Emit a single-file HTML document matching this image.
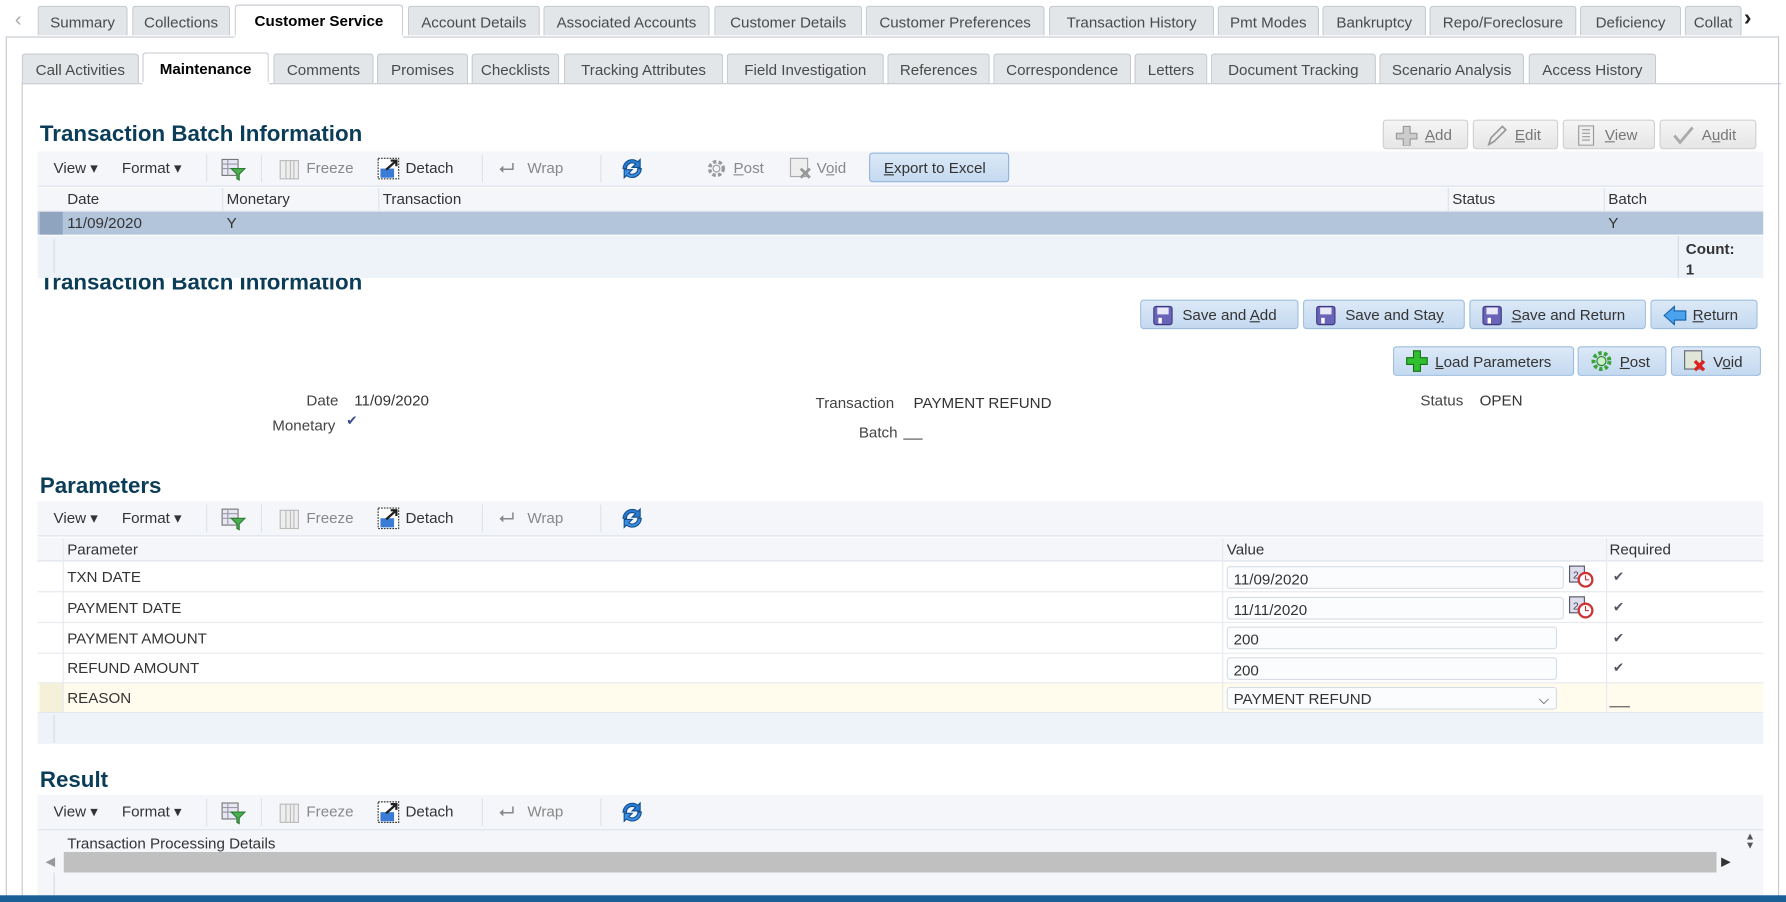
<!DOCTYPE html>
<html><head><meta charset="utf-8"><style>
html,body{margin:0;padding:0;background:#fff;overflow:hidden;width:1786px;height:902px}
#w{position:absolute;left:0;top:0;width:1568px;height:792px;transform:scale(1.13903);transform-origin:0 0;font-family:"Liberation Sans",sans-serif;font-size:13.3px;color:#333}
.a{position:absolute}
.tab{position:absolute;height:26px;line-height:27px;background:#e3e6e9;border:1px solid #c5cad0;border-bottom:none;border-radius:3px 3px 0 0;color:#4a4a4a;text-align:center;box-sizing:border-box}
.tab.on{background:#fff;color:#000;font-weight:bold;height:28px}
.h{position:absolute;font-weight:bold;font-size:19.6px;color:#0b3d58}
.tb{position:absolute;left:33px;width:1515px;height:30px;background:#f4f6fa;border-bottom:1px solid #dde2ea}
.tb span{position:absolute;top:7px;color:#333}
.tb .g{color:#888}
.sep{position:absolute;top:3px;width:1px;height:24px;background:#dde2ea}
.btn{position:absolute;height:26px;line-height:26px;border:1px solid #9cbde0;border-radius:3px;background:linear-gradient(#dce9f7,#c4d9f0);color:#333;box-sizing:border-box;padding-left:36px}
.btn.g{background:linear-gradient(#f5f5f5,#e6e6e6);border-color:#cfcfcf;color:#777}
u{text-decoration:underline}
.ic{position:absolute;left:10px;top:4px}
.lbl{position:absolute;color:#444}
.inp{position:absolute;height:20px;border:1px solid #d8dde5;border-radius:3px;background:#fbfcfe;line-height:21px;padding-left:5px;box-sizing:border-box}
.chk{position:absolute;color:#556;font-size:12px}
</style></head><body><div id="w">

<!-- top tabs -->
<div class="a" style="left:13px;top:7px;color:#aaa;font-size:18px">‹</div>
<div class="tab" style="left:33px;top:5px;width:79px">Summary</div>
<div class="tab" style="left:116px;top:5px;width:86px">Collections</div>
<div class="tab on" style="left:206px;top:4px;width:148px">Customer Service</div>
<div class="tab" style="left:358px;top:5px;width:116px">Account Details</div>
<div class="tab" style="left:477px;top:5px;width:146px">Associated Accounts</div>
<div class="tab" style="left:627px;top:5px;width:130px">Customer Details</div>
<div class="tab" style="left:760px;top:5px;width:157px">Customer Preferences</div>
<div class="tab" style="left:921px;top:5px;width:145px">Transaction History</div>
<div class="tab" style="left:1069px;top:5px;width:89px">Pmt Modes</div>
<div class="tab" style="left:1161px;top:5px;width:91px">Bankruptcy</div>
<div class="tab" style="left:1255px;top:5px;width:129px">Repo/Foreclosure</div>
<div class="tab" style="left:1387px;top:5px;width:89px">Deficiency</div>
<div class="tab" style="left:1479px;top:5px;width:50px;text-align:left;padding-left:7px;overflow:hidden">Collat</div>
<div class="a" style="left:1531px;top:5px;color:#222;font-size:20px;font-weight:bold">›</div>
<div class="a" style="left:5px;top:32px;width:1557px;height:760px;border:1px solid #c5cad0;border-bottom:none;box-sizing:border-box"></div>
<div class="a" style="left:206px;top:31px;width:148px;height:3px;background:#fff"></div>

<!-- second tabs -->
<div class="tab" style="left:19px;top:47px;width:103px">Call Activities</div>
<div class="tab on" style="left:125px;top:46px;width:111px">Maintenance</div>
<div class="tab" style="left:240px;top:47px;width:88px">Comments</div>
<div class="tab" style="left:331px;top:47px;width:80px">Promises</div>
<div class="tab" style="left:414px;top:47px;width:77px">Checklists</div>
<div class="tab" style="left:495px;top:47px;width:140px">Tracking Attributes</div>
<div class="tab" style="left:638px;top:47px;width:138px">Field Investigation</div>
<div class="tab" style="left:779px;top:47px;width:90px">References</div>
<div class="tab" style="left:872px;top:47px;width:121px">Correspondence</div>
<div class="tab" style="left:996px;top:47px;width:64px">Letters</div>
<div class="tab" style="left:1063px;top:47px;width:145px">Document Tracking</div>
<div class="tab" style="left:1211px;top:47px;width:127px">Scenario Analysis</div>
<div class="tab" style="left:1342px;top:47px;width:112px">Access History</div>
<div class="a" style="left:19px;top:73px;width:1545px;height:719px;border:1px solid #c5cad0;border-right:none;border-bottom:none;box-sizing:border-box"></div>
<div class="a" style="left:125px;top:72px;width:111px;height:3px;background:#fff"></div>

<!-- section 1 -->
<div class="h" style="left:35px;top:107px">Transaction Batch Information</div>
<div class="btn g" style="left:1214px;top:105px;width:75px">
<svg class="ic" width="20" height="18" viewBox="0 0 20 18"><path d="M7 1h6v6h6v5h-6v6H7v-6H1V7h6z" fill="#ccc" stroke="#999"/></svg><u>A</u>dd</div>
<div class="btn g" style="left:1293px;top:105px;width:75px">
<svg class="ic" width="20" height="18" viewBox="0 0 20 18"><path d="M3 17l2-6L15 1l3 3L8 14z" fill="none" stroke="#999" stroke-width="1.5"/></svg><u>E</u>dit</div>
<div class="btn g" style="left:1372px;top:105px;width:81px">
<svg class="ic" width="20" height="18" viewBox="0 0 20 18"><rect x="3" y="0.5" width="13" height="17" fill="#eee" stroke="#999"/><path d="M6 4h7M6 7h7M6 10h7M6 13h7" stroke="#999"/></svg><u>V</u>iew</div>
<div class="btn g" style="left:1457px;top:105px;width:85px">
<svg class="ic" width="20" height="18" viewBox="0 0 20 18"><path d="M2 9l5 6L18 2" fill="none" stroke="#aaa" stroke-width="2.5"/></svg>A<u>u</u>dit</div>

<div class="tb" style="top:133px">
<span style="left:14px">View ▾</span><span style="left:74px">Format ▾</span>
<div class="sep" style="left:148px"></div>
<svg class="a" style="left:161px;top:6px" width="22" height="20" viewBox="0 0 22 20"><rect x="1" y="1" width="14" height="14" fill="#e8e8f4" stroke="#777"/><path d="M1 5h14M1 9h14M6 1v14" stroke="#99a"/><path d="M9 9h12l-5 5v5l-2-1v-4z" fill="#4caf50" stroke="#2e7d32"/></svg>
<div class="sep" style="left:196px"></div>
<svg class="a" style="left:212px;top:7px" width="18" height="18" viewBox="0 0 18 18"><rect x="1" y="1" width="16" height="16" fill="#eee" stroke="#bbb"/><path d="M6 1v16M10 1v16M13 1v16" stroke="#bbb"/></svg>
<span class="g" style="left:236px">Freeze</span>
<svg class="a" style="left:298px;top:5px" width="20" height="20" viewBox="0 0 20 20"><rect x="1" y="1" width="18" height="18" fill="#fff" stroke="#333" stroke-dasharray="1.5 1"/><rect x="3" y="10" width="12" height="8" fill="#3a7bd5"/><path d="M8 11L17 3M12 3h5v5" stroke="#222" stroke-width="2" fill="none"/></svg>
<span style="left:323px">Detach</span>
<div class="sep" style="left:390px"></div>
<span class="g" style="left:405px;font-size:17px;top:5px">⮠</span><span class="g" style="left:430px">Wrap</span>
<div class="sep" style="left:494px"></div>
<svg class="a" style="left:511px;top:5px" width="22" height="20" viewBox="0 0 22 20"><path d="M3 10a8 8 0 0 1 13-6l2-2v7h-7l3-3a5 5 0 0 0-8 4z" fill="#2a7dd2" stroke="#124f8f"/><path d="M19 10a8 8 0 0 1-13 6l-2 2v-7h7l-3 3a5 5 0 0 0 8-4z" fill="#3c8ee0" stroke="#124f8f"/></svg>
<svg class="a" style="left:586px;top:5px" width="20" height="20" viewBox="0 0 20 20"><circle cx="10" cy="10" r="6" fill="none" stroke="#999" stroke-width="3" stroke-dasharray="3 2"/><circle cx="10" cy="10" r="3" fill="none" stroke="#999"/></svg>
<span class="g" style="left:611px"><u>P</u>ost</span>
<svg class="a" style="left:660px;top:5px" width="20" height="20" viewBox="0 0 20 20"><rect x="1" y="1" width="15" height="16" fill="#eee" stroke="#aaa"/><path d="M10 10l8 8M18 10l-8 8" stroke="#999" stroke-width="2.5"/></svg>
<span class="g" style="left:684px">V<u>o</u>id</span>
</div>
<div class="btn" style="left:763px;top:134px;width:123px;padding-left:12px;border-color:#8fb3d9"><u>E</u>xport to Excel</div>

<div class="a" style="left:33px;top:165px;width:1515px;height:20px;background:#f4f6fa;border-bottom:1px solid #dde2ea"></div>
<div class="a" style="left:59px;top:167px">Date</div>
<div class="a" style="left:195px;top:165px;width:1px;height:41px;background:#dde2ea"></div>
<div class="a" style="left:199px;top:167px">Monetary</div>
<div class="a" style="left:332px;top:165px;width:1px;height:41px;background:#dde2ea"></div>
<div class="a" style="left:336px;top:167px">Transaction</div>
<div class="a" style="left:1271px;top:165px;width:1px;height:41px;background:#dde2ea"></div>
<div class="a" style="left:1275px;top:167px">Status</div>
<div class="a" style="left:1408px;top:165px;width:1px;height:41px;background:#dde2ea"></div>
<div class="a" style="left:1412px;top:167px">Batch</div>
<div class="a" style="left:33px;top:186px;width:1515px;height:20px;background:#b3c5db"></div>
<div class="a" style="left:35px;top:186px;width:20px;height:20px;background:#8ea4bf"></div>
<div class="a" style="left:59px;top:188px">11/09/2020</div>
<div class="a" style="left:199px;top:188px">Y</div>
<div class="a" style="left:1412px;top:188px">Y</div>
<div class="a" style="left:33px;top:207px;width:1515px;height:37px;background:#eef2f9"></div>
<div class="a" style="left:47px;top:210px;width:1px;height:30px;background:#d5dbe5"></div>
<div class="a" style="left:1473px;top:207px;width:1px;height:37px;background:#d5dbe5"></div>
<div class="a" style="left:1480px;top:210px;font-weight:bold;line-height:18px">Count:<br>1</div>

<!-- section 2 -->
<div class="a" style="left:35px;top:244px;width:400px;height:16px;overflow:hidden"><div class="h" style="left:0;top:-7px;white-space:nowrap">Transaction Batch Information</div></div>
<div class="btn" style="left:1001px;top:263px;width:139px"><svg class="ic" width="18" height="18" viewBox="0 0 18 18"><rect x="1" y="1" width="16" height="16" rx="2" fill="#6a64b8" stroke="#3d3880"/><rect x="4" y="2" width="10" height="6" fill="#e8e8f8"/><rect x="5" y="11" width="3" height="5" fill="#fff"/></svg>Save and <u>A</u>dd</div>
<div class="btn" style="left:1144px;top:263px;width:142px"><svg class="ic" width="18" height="18" viewBox="0 0 18 18"><rect x="1" y="1" width="16" height="16" rx="2" fill="#6a64b8" stroke="#3d3880"/><rect x="4" y="2" width="10" height="6" fill="#e8e8f8"/><rect x="5" y="11" width="3" height="5" fill="#fff"/></svg>Save and Sta<u>y</u></div>
<div class="btn" style="left:1290px;top:263px;width:155px"><svg class="ic" width="18" height="18" viewBox="0 0 18 18"><rect x="1" y="1" width="16" height="16" rx="2" fill="#6a64b8" stroke="#3d3880"/><rect x="4" y="2" width="10" height="6" fill="#e8e8f8"/><rect x="5" y="11" width="3" height="5" fill="#fff"/></svg><u>S</u>ave and Return</div>
<div class="btn" style="left:1449px;top:263px;width:94px"><svg class="ic" width="22" height="18" viewBox="0 0 22 18"><path d="M1 9l9-8v4h10v8H10v4z" fill="#4aa3ef" stroke="#1660a8"/></svg><u>R</u>eturn</div>
<div class="btn" style="left:1223px;top:304px;width:159px"><svg class="ic" width="20" height="20" viewBox="0 0 20 20" style="top:2px"><path d="M7 1h6v6h6v6h-6v6H7v-6H1V7h6z" fill="#2fbf2f" stroke="#137013"/></svg><u>L</u>oad Parameters</div>
<div class="btn" style="left:1385px;top:304px;width:78px"><svg class="ic" width="20" height="20" viewBox="0 0 20 20" style="top:2px"><circle cx="10" cy="10" r="7" fill="none" stroke="#3aa33a" stroke-width="3.5" stroke-dasharray="3 2"/><circle cx="10" cy="10" r="4" fill="#c8f0c8" stroke="#2a7d2a"/></svg><u>P</u>ost</div>
<div class="btn" style="left:1467px;top:304px;width:79px"><svg class="ic" width="20" height="20" viewBox="0 0 20 20" style="top:2px"><rect x="1" y="1" width="15" height="16" fill="#dfe8d8" stroke="#667"/><path d="M10 10l8 8M18 10l-8 8" stroke="#d22" stroke-width="3"/></svg>V<u>o</u>id</div>

<div class="lbl" style="left:269px;top:344px">Date</div><div class="a" style="left:311px;top:344px">11/09/2020</div>
<div class="lbl" style="left:239px;top:366px">Monetary</div><div class="chk" style="left:304px;top:362px;color:#3a4a8a">✔</div>
<div class="lbl" style="left:716px;top:346px">Transaction</div><div class="a" style="left:802px;top:346px">PAYMENT REFUND</div>
<div class="lbl" style="left:754px;top:372px">Batch</div><div class="a" style="left:793px;top:385px;width:17px;height:1px;background:#555"></div>
<div class="lbl" style="left:1247px;top:344px">Status</div><div class="a" style="left:1299px;top:344px">OPEN</div>

<!-- parameters -->
<div class="h" style="left:35px;top:416px">Parameters</div>
<div class="tb" style="top:440px">
<span style="left:14px">View ▾</span><span style="left:74px">Format ▾</span>
<div class="sep" style="left:148px"></div>
<svg class="a" style="left:161px;top:6px" width="22" height="20" viewBox="0 0 22 20"><rect x="1" y="1" width="14" height="14" fill="#e8e8f4" stroke="#777"/><path d="M1 5h14M1 9h14M6 1v14" stroke="#99a"/><path d="M9 9h12l-5 5v5l-2-1v-4z" fill="#4caf50" stroke="#2e7d32"/></svg>
<div class="sep" style="left:196px"></div>
<svg class="a" style="left:212px;top:7px" width="18" height="18" viewBox="0 0 18 18"><rect x="1" y="1" width="16" height="16" fill="#eee" stroke="#bbb"/><path d="M6 1v16M10 1v16M13 1v16" stroke="#bbb"/></svg>
<span class="g" style="left:236px">Freeze</span>
<svg class="a" style="left:298px;top:5px" width="20" height="20" viewBox="0 0 20 20"><rect x="1" y="1" width="18" height="18" fill="#fff" stroke="#333" stroke-dasharray="1.5 1"/><rect x="3" y="10" width="12" height="8" fill="#3a7bd5"/><path d="M8 11L17 3M12 3h5v5" stroke="#222" stroke-width="2" fill="none"/></svg>
<span style="left:323px">Detach</span>
<div class="sep" style="left:390px"></div>
<span class="g" style="left:405px;font-size:17px;top:5px">⮠</span><span class="g" style="left:430px">Wrap</span>
<div class="sep" style="left:494px"></div>
<svg class="a" style="left:511px;top:5px" width="22" height="20" viewBox="0 0 22 20"><path d="M3 10a8 8 0 0 1 13-6l2-2v7h-7l3-3a5 5 0 0 0-8 4z" fill="#2a7dd2" stroke="#124f8f"/><path d="M19 10a8 8 0 0 1-13 6l-2 2v-7h7l-3 3a5 5 0 0 0 8-4z" fill="#3c8ee0" stroke="#124f8f"/></svg>
</div>
<div class="a" style="left:33px;top:472px;width:1515px;height:20px;background:#f4f6fa;border-bottom:1px solid #dde2ea"></div>
<div class="a" style="left:59px;top:475px">Parameter</div>
<div class="a" style="left:1077px;top:475px">Value</div>
<div class="a" style="left:1413px;top:475px">Required</div>
<div class="a" style="left:33px;top:493px;width:1515px;height:132px;border-bottom:1px solid #e4e8ee"></div>
<div class="a" style="left:33px;top:519px;width:1515px;height:1px;background:#e6e9ee"></div>
<div class="a" style="left:33px;top:546px;width:1515px;height:1px;background:#e6e9ee"></div>
<div class="a" style="left:33px;top:573px;width:1515px;height:1px;background:#e6e9ee"></div>
<div class="a" style="left:33px;top:599px;width:1515px;height:1px;background:#e6e9ee"></div>
<div class="a" style="left:33px;top:600px;width:1515px;height:25px;background:#fffcee"></div>
<div class="a" style="left:35px;top:600px;width:20px;height:25px;background:#f5f0d8"></div>
<div class="a" style="left:55px;top:473px;width:1px;height:152px;background:#e6e9ee"></div>
<div class="a" style="left:1073px;top:473px;width:1px;height:152px;background:#e6e9ee"></div>
<div class="a" style="left:1410px;top:473px;width:1px;height:152px;background:#e6e9ee"></div>
<div class="a" style="left:59px;top:499px">TXN DATE</div>
<div class="a" style="left:59px;top:526px">PAYMENT DATE</div>
<div class="a" style="left:59px;top:553px">PAYMENT AMOUNT</div>
<div class="a" style="left:59px;top:579px">REFUND AMOUNT</div>
<div class="a" style="left:59px;top:605px">REASON</div>
<div class="inp" style="left:1077px;top:497px;width:296px">11/09/2020</div>
<div class="inp" style="left:1077px;top:524px;width:296px">11/11/2020</div>
<div class="inp" style="left:1077px;top:550px;width:290px">200</div>
<div class="inp" style="left:1077px;top:577px;width:290px">200</div>
<div class="inp" style="left:1077px;top:603px;width:290px;line-height:20px">PAYMENT REFUND<span class="a" style="right:6px;top:0;font-size:12px">&#x2335;</span></div>
<svg class="a" style="left:1377px;top:494px" width="22" height="22" viewBox="0 0 22 22"><rect x="1" y="3" width="13" height="14" fill="#dde" stroke="#556"/><text x="4" y="14" font-size="9" fill="#445" font-family="Liberation Sans">2</text><circle cx="15" cy="15" r="6" fill="#fff" stroke="#c33" stroke-width="2"/><path d="M15 11v4h3" stroke="#c33" fill="none"/></svg>
<svg class="a" style="left:1377px;top:521px" width="22" height="22" viewBox="0 0 22 22"><rect x="1" y="3" width="13" height="14" fill="#dde" stroke="#556"/><text x="4" y="14" font-size="9" fill="#445" font-family="Liberation Sans">2</text><circle cx="15" cy="15" r="6" fill="#fff" stroke="#c33" stroke-width="2"/><path d="M15 11v4h3" stroke="#c33" fill="none"/></svg>
<div class="chk" style="left:1416px;top:499px">✔</div>
<div class="chk" style="left:1416px;top:526px">✔</div>
<div class="chk" style="left:1416px;top:553px">✔</div>
<div class="chk" style="left:1416px;top:579px">✔</div>
<div class="a" style="left:1413px;top:620px;width:18px;height:1px;background:#555"></div>
<div class="a" style="left:33px;top:626px;width:1515px;height:27px;background:#eef2f9"></div>
<div class="a" style="left:47px;top:628px;width:1px;height:24px;background:#d5dbe5"></div>

<!-- result -->
<div class="h" style="left:35px;top:674px">Result</div>
<div class="tb" style="top:698px">
<span style="left:14px">View ▾</span><span style="left:74px">Format ▾</span>
<div class="sep" style="left:148px"></div>
<svg class="a" style="left:161px;top:6px" width="22" height="20" viewBox="0 0 22 20"><rect x="1" y="1" width="14" height="14" fill="#e8e8f4" stroke="#777"/><path d="M1 5h14M1 9h14M6 1v14" stroke="#99a"/><path d="M9 9h12l-5 5v5l-2-1v-4z" fill="#4caf50" stroke="#2e7d32"/></svg>
<div class="sep" style="left:196px"></div>
<svg class="a" style="left:212px;top:7px" width="18" height="18" viewBox="0 0 18 18"><rect x="1" y="1" width="16" height="16" fill="#eee" stroke="#bbb"/><path d="M6 1v16M10 1v16M13 1v16" stroke="#bbb"/></svg>
<span class="g" style="left:236px">Freeze</span>
<svg class="a" style="left:298px;top:5px" width="20" height="20" viewBox="0 0 20 20"><rect x="1" y="1" width="18" height="18" fill="#fff" stroke="#333" stroke-dasharray="1.5 1"/><rect x="3" y="10" width="12" height="8" fill="#3a7bd5"/><path d="M8 11L17 3M12 3h5v5" stroke="#222" stroke-width="2" fill="none"/></svg>
<span style="left:323px">Detach</span>
<div class="sep" style="left:390px"></div>
<span class="g" style="left:405px;font-size:17px;top:5px">⮠</span><span class="g" style="left:430px">Wrap</span>
<div class="sep" style="left:494px"></div>
<svg class="a" style="left:511px;top:5px" width="22" height="20" viewBox="0 0 22 20"><path d="M3 10a8 8 0 0 1 13-6l2-2v7h-7l3-3a5 5 0 0 0-8 4z" fill="#2a7dd2" stroke="#124f8f"/><path d="M19 10a8 8 0 0 1-13 6l-2 2v-7h7l-3 3a5 5 0 0 0 8-4z" fill="#3c8ee0" stroke="#124f8f"/></svg>
</div>
<div class="a" style="left:33px;top:729px;width:1515px;height:57px;background:#f4f6fa"></div>
<div class="a" style="left:59px;top:733px;height:15px;overflow:hidden">Transaction Processing Details</div>
<div class="a" style="left:56px;top:748px;width:1451px;height:18px;background:#c0c0c0"></div>
<div class="a" style="left:40px;top:750px;color:#999;font-size:11px">◀</div>
<div class="a" style="left:1511px;top:750px;color:#333;font-size:11px">▶</div>
<div class="a" style="left:1532px;top:730px;color:#555;font-size:9px;line-height:8px">▲<br>▼</div>
<div class="a" style="left:47px;top:766px;width:1px;height:20px;background:#d5dbe5"></div>
<div class="a" style="left:0;top:786px;width:1568px;height:6px;background:#1b5f97"></div>
</div></body></html>
